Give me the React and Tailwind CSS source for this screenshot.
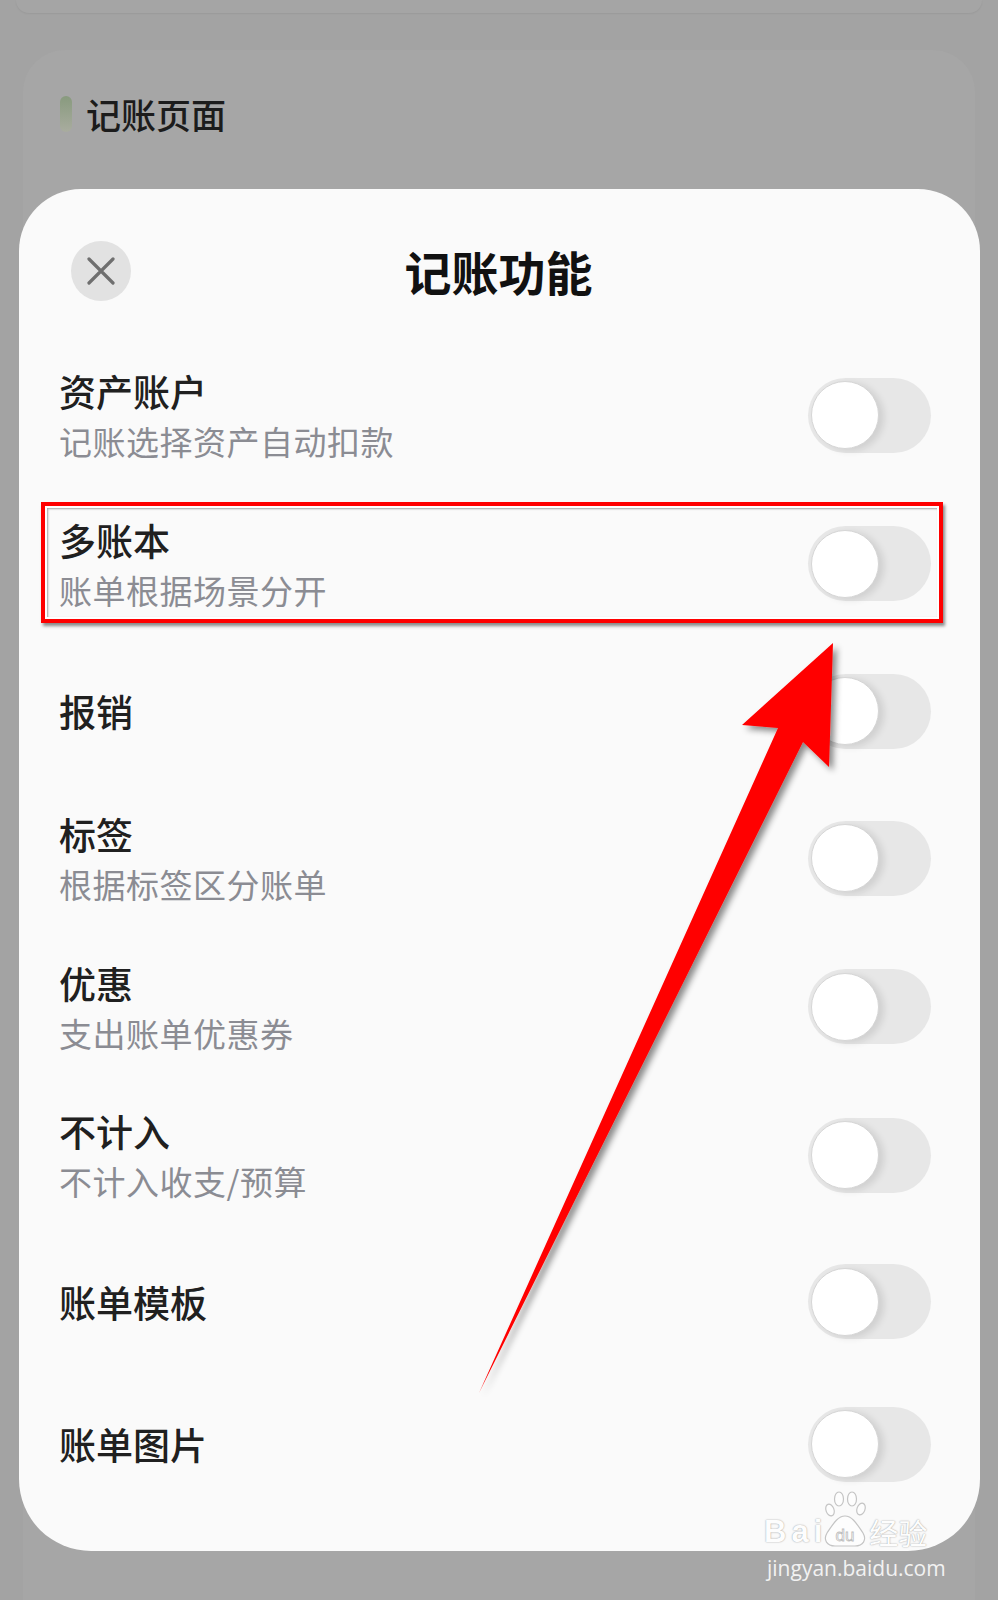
import React from 'react';

const rows = [
  { title: '资产账户', sub: '记账选择资产自动扣款', h: 'h-[148px]' },
  { title: '多账本', sub: '账单根据场景分开', h: 'h-[149px]' },
  { title: '报销', sub: null, h: 'h-[146px]' },
  { title: '标签', sub: '根据标签区分账单', h: 'h-[148px]' },
  { title: '优惠', sub: '支出账单优惠券', h: 'h-[149px]' },
  { title: '不计入', sub: '不计入收支/预算', h: 'h-[148px]' },
  { title: '账单模板', sub: null, h: 'h-[145px]' },
  { title: '账单图片', sub: null, h: 'h-[140px]' },
];

const Toggle = () => (
  <div className="w-[123px] h-[75px] rounded-full bg-[#e7e7e7] flex items-center pl-[3px]">
    <div className="w-[68px] h-[68px] rounded-full bg-white border border-[#d6d6d6] shadow-[5px_2px_7px_rgba(0,0,0,0.10)]" />
  </div>
);

const Arrow = () => (
  <svg className="absolute left-0 top-0 pointer-events-none" width="998" height="1600" viewBox="0 0 998 1600">
    <defs>
      <filter id="arrowShadow" x="-20%" y="-20%" width="140%" height="140%">
        <feDropShadow dx="4" dy="4" stdDeviation="3" floodColor="#000" floodOpacity="0.45" />
      </filter>
    </defs>
    <polygon
      points="479,1393 803,742 829,767 833,643 742,725 778,728"
      fill="#ff0000"
      filter="url(#arrowShadow)"
    />
  </svg>
);

// baidu jingyan watermark, white glyphs with a faint grey edge
const Watermark = () => (
  <div className="absolute left-[764px] top-[1488px] font-['Liberation_Sans',sans-serif]">
    <div className="flex items-end h-[60px]">
      <span className="text-[31px] leading-[32px] font-bold tracking-[5px] text-[#fdfdfd] [text-shadow:0_0_1.5px_rgba(0,0,0,0.45)]">Bai</span>
      <svg width="44" height="60" viewBox="0 0 44 60" className="-ml-[4px]">
        <g fill="#fdfdfd" stroke="#c4c4c4" strokeWidth="1.2">
          <ellipse cx="7" cy="22" rx="4" ry="6" transform="rotate(-20 7 22)" />
          <ellipse cx="16" cy="11" rx="4.5" ry="7" />
          <ellipse cx="29" cy="11" rx="4.5" ry="7" />
          <ellipse cx="38" cy="21" rx="4" ry="6" transform="rotate(20 38 21)" />
          <path d="M22 28 C14 28 9 38 4 45 C0 52 4 58 12 58 L32 58 C40 58 44 52 40 45 C35 38 30 28 22 28 Z" />
        </g>
        <text x="22" y="53" textAnchor="middle" fontSize="17" fontFamily="Liberation Sans, sans-serif" fill="#fdfdfd" stroke="#bdbdbd" strokeWidth="0.8">du</text>
      </svg>
      <span className="ml-[2px] text-[29px] leading-[32px] font-['Noto_Sans_CJK_SC',sans-serif] text-[#fdfdfd] [text-shadow:0_0_1.5px_rgba(0,0,0,0.45)]">经验</span>
    </div>
    <div className="mt-[8px] ml-[3px] text-[21px] leading-[24px] text-[#f2f2f2] font-['Open_Sans',sans-serif]">jingyan.baidu.com</div>
  </div>
);

export default function App() {
  return (
    <div className="relative w-[998px] h-[1600px] overflow-hidden bg-[#a3a3a3] font-['Noto_Sans_CJK_SC',sans-serif]">
      {/* dimmed page behind the sheet */}
      <div className="h-[13px] mx-[16px] rounded-b-[28px] bg-[#a5a5a5] shadow-[0_1px_2px_rgba(0,0,0,0.06)]" />
      <div className="mt-[37px] mx-[23px] h-[1600px] rounded-t-[42px] bg-[#a6a6a6] pt-[42px] pl-[37px]">
        <div className="flex items-center gap-[14px]">
          <div className="w-[12px] h-[36px] rounded-full bg-linear-to-b from-[#889a7e] to-[#a9ac9f]" />
          <span className="text-[35px] leading-[44px] font-medium text-[#1c1c1c]">记账页面</span>
        </div>
      </div>

      {/* bottom sheet */}
      <div className="absolute top-[189px] left-[19px] w-[961px] h-[1362px] rounded-t-[62px] rounded-b-[72px] bg-[#fafafa]">
        <div className="grid grid-cols-[1fr_auto_1fr] items-center pt-[52px] pl-[52px] pr-[52px]">
          <button className="w-[60px] h-[60px] rounded-full bg-[#e2e2e2] flex items-center justify-center">
            <svg width="28" height="28" viewBox="0 0 28 28" fill="none" stroke="#6f6f6f" strokeWidth="3.2" strokeLinecap="round">
              <path d="M2 2 L26 26 M26 2 L2 26" />
            </svg>
          </button>
          <h1 className="text-[47px] leading-[60px] font-bold text-[#111] -translate-x-[1px]">记账功能</h1>
          <div />
        </div>

        <div className="mt-[40px] pl-[40px] pr-[49px]">
          {rows.map((row) => (
            <div key={row.title} className={`${row.h} flex items-center justify-between`}>
              <div>
                <div className="text-[37px] leading-[48px] font-medium text-[#202020]">{row.title}</div>
                {row.sub && (
                  <div className="mt-[4px] text-[33px] leading-[44px] tracking-[0.5px] text-[#8b8c93]">{row.sub}</div>
                )}
              </div>
              <Toggle />
            </div>
          ))}
        </div>
      </div>

      {/* annotation: highlight box */}
      <div className="absolute left-[41px] top-[502px] w-[902px] h-[121px] border-[4px] border-[#ff0000] shadow-[2px_3px_3px_rgba(0,0,0,0.45),inset_0_0_0_2px_#ffffff,inset_1px_1px_2px_2px_rgba(0,0,0,0.35)]" />

      <Arrow />
      <Watermark />
    </div>
  );
}
